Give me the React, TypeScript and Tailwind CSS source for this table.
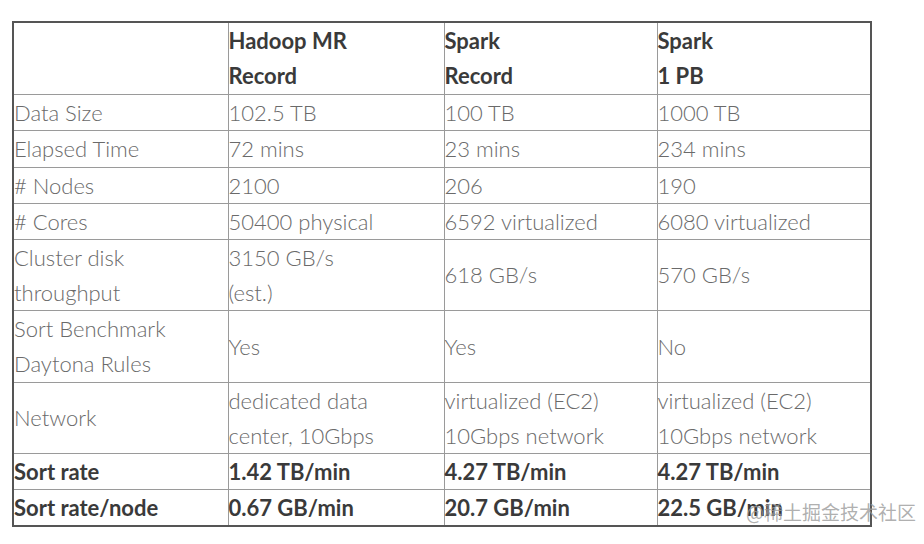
import React from "react";

const rows: { label: string; cells: string[]; h: string; bold?: boolean }[] = [
  { label: "Data Size", cells: ["102.5 TB", "100 TB", "1000 TB"], h: "h-[36px]" },
  { label: "Elapsed Time", cells: ["72 mins", "23 mins", "234 mins"], h: "h-[37px]" },
  { label: "# Nodes", cells: ["2100", "206", "190"], h: "h-[36px]" },
  { label: "# Cores", cells: ["50400 physical", "6592 virtualized", "6080 virtualized"], h: "h-[36px]" },
  { label: "Cluster disk\nthroughput", cells: ["3150 GB/s\n(est.)", "618 GB/s", "570 GB/s"], h: "h-[71px]" },
  { label: "Sort Benchmark\nDaytona Rules", cells: ["Yes", "Yes", "No"], h: "h-[72px]" },
  { label: "Network", cells: ["dedicated data\ncenter, 10Gbps", "virtualized (EC2)\n10Gbps network", "virtualized (EC2)\n10Gbps network"], h: "h-[71px]" },
  { label: "Sort rate", cells: ["1.42 TB/min", "4.27 TB/min", "4.27 TB/min"], h: "h-[35px]", bold: true },
  { label: "Sort rate/node", cells: ["0.67 GB/min", "20.7 GB/min", "22.5 GB/min"], h: "h-[36px]", bold: true },
];

function Cell({ text, bold }: { text: string; bold?: boolean }) {
  return (
    <td
      className={
        "border border-[#9a9a9a] p-0 align-middle whitespace-pre leading-[35px] text-[22px] " +
        (bold ? "font-bold text-[#3a3a3a]" : "font-light text-[#6a6a6a]")
      }
    >
      {text}
    </td>
  );
}

export default function App() {
  return (
    <div className="relative w-[924px] h-[544px] bg-white pt-[21px] pl-[12px]" style={{ fontFamily: "Lato, 'Noto Sans', sans-serif" }}>
      <table className="border-collapse border-2 border-[#555] table-fixed w-[858px]">
        <colgroup>
          <col className="w-[215px]" />
          <col className="w-[216px]" />
          <col className="w-[213px]" />
          <col className="w-[214px]" />
        </colgroup>
        <tbody>
          <tr className="h-[72px]">
            <Cell text="" />
            <Cell text={"Hadoop MR\nRecord"} bold />
            <Cell text={"Spark\nRecord"} bold />
            <Cell text={"Spark\n1 PB"} bold />
          </tr>
          {rows.map((r) => (
            <tr key={r.label} className={r.h}>
              <Cell text={r.label} bold={r.bold} />
              {r.cells.map((c, i) => (
                <Cell key={i} text={c} bold={r.bold} />
              ))}
            </tr>
          ))}
        </tbody>
      </table>
      <div
        className="absolute left-[746px] top-[500px] text-[19px] leading-[24px] text-[#9a9a9a]/80"
        style={{ fontFamily: "'Noto Sans CJK SC', sans-serif" }}
      >
        @稀土掘金技术社区
      </div>
    </div>
  );
}
